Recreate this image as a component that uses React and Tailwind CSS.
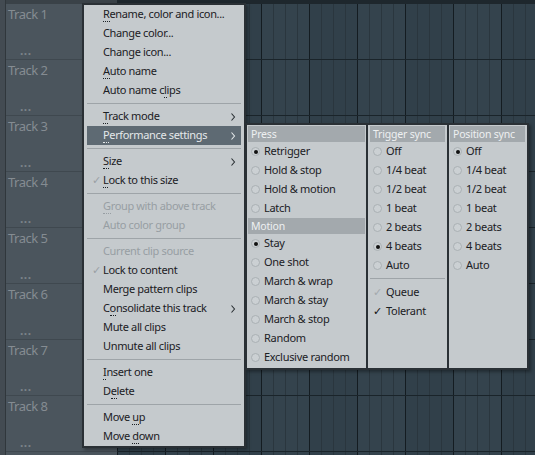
import React from 'react';

const mainMenu = [
  { label: 'Rename, color and icon...', u: 0 },
  { label: 'Change color...' },
  { label: 'Change icon...' },
  { label: 'Auto name', u: 0 },
  { label: 'Auto name clips', u: 11 },
  'sep',
  { label: 'Track mode', u: 0, sub: true },
  { label: 'Performance settings', u: 0, sub: true, active: true },
  'sep',
  { label: 'Size', u: 0, sub: true },
  { label: 'Lock to this size', u: 0, check: true },
  'sep',
  { label: 'Group with above track', u: 0, disabled: true },
  { label: 'Auto color group', disabled: true },
  'sep',
  { label: 'Current clip source', disabled: true },
  { label: 'Lock to content', check: true },
  { label: 'Merge pattern clips' },
  { label: 'Consolidate this track', u: 1, sub: true },
  { label: 'Mute all clips' },
  { label: 'Unmute all clips' },
  'sep',
  { label: 'Insert one', u: 0 },
  { label: 'Delete', u: 1 },
  'sep',
  { label: 'Move up', u: 5 },
  { label: 'Move down', u: 5 },
];

const press = [
  { label: 'Retrigger', on: true },
  { label: 'Hold & stop' },
  { label: 'Hold & motion' },
  { label: 'Latch' },
];
const motion = [
  { label: 'Stay', on: true },
  { label: 'One shot' },
  { label: 'March & wrap' },
  { label: 'March & stay' },
  { label: 'March & stop' },
  { label: 'Random' },
  { label: 'Exclusive random' },
];
const beats = ['Off', '1/4 beat', '1/2 beat', '1 beat', '2 beats', '4 beats', 'Auto'];

const rows = [1, 2, 3, 4, 5, 6, 7, 8, 9];
const cols = Array.from({ length: 36 }, (_, i) => i);

function Label({ text, u }) {
  if (u === undefined) return <>{text}</>;
  return (
    <>
      {text.slice(0, u)}
      <span className="border-b border-dotted border-current">{text[u]}</span>
      {text.slice(u + 1)}
    </>
  );
}

function Chevron({ light }) {
  return (
    <svg width="6" height="10" viewBox="0 0 6 10" className="absolute right-[5px] top-[5px]">
      <path d="M1.5 1.5 L4.5 5 L1.5 8.5" fill="none" stroke={light ? '#e4e8ea' : '#2a3034'} strokeWidth="1.1" />
    </svg>
  );
}

function Radio({ on }) {
  return (
    <span className="w-[9px] h-[9px] rounded-full border border-[#aab0b4] bg-[#cbd0d3] flex items-center justify-center shrink-0">
      {on && <span className="w-[4px] h-[4px] rounded-full bg-[#111]" />}
    </span>
  );
}

function RadioRow({ label, on }) {
  return (
    <div className="h-[19px] flex items-center pl-[3px]">
      <Radio on={on} />
      <span className="ml-[4px]">{label}</span>
    </div>
  );
}

function Header({ children }) {
  return (
    <div className="h-[16px] bg-[#a3a9ad] text-[#eef0f1] text-[10.5px] leading-[16px] pl-[3px] tracking-[-0.2px]">{children}</div>
  );
}

export default function App() {
  return (
    <div className="w-[535px] h-[455px] relative overflow-hidden flex bg-[#34434d] font-['Noto_Sans',sans-serif]">
      {/* track headers */}
      <div className="w-[117px] shrink-0 flex">
        <div className="w-[5px] bg-[#434b52]" />
        <div className="w-[1px] bg-[#30373c]" />
        <div className="flex-1 flex flex-col bg-[#4b555d]">
          <div className="h-[4px] shrink-0 bg-[#3a4248]" />
          {rows.map((r) => (
            <div key={r} className="h-[56px] shrink-0 flex flex-col border-b border-[#3f484f] pl-[2px]">
              {r < 9 && (
                <>
                  <div className="text-[13px] leading-[16px] tracking-[-0.5px] text-[#858c92] pt-[2px]">Track {r}</div>
                  <div className="mt-auto pl-[12px] text-[12px] leading-[10px] font-bold text-[#7b8389] pb-[3px] tracking-[0.5px]">...</div>
                </>
              )}
            </div>
          ))}
        </div>
      </div>

      {/* playlist grid */}
      <div className="flex-1 flex flex-col">
        <div className="h-[4px] shrink-0 bg-[#1e272d]" />
        {rows.map((r) => (
          <div key={r} className="h-[56px] shrink-0 flex border-b border-[#1a242a]">
            {cols.map((c) => (
              <div
                key={c}
                className={`w-[12px] shrink-0 border-l ${c % 4 === 0 ? 'border-[#141c21]' : 'border-[#2a363e]'} ${Math.floor(c / 4) % 2 ? 'bg-[#34434d]' : 'bg-[#31404a]'}`}
              />
            ))}
          </div>
        ))}
      </div>

      {/* context menu */}
      <div className="absolute left-[82px] top-[3px] w-[164px] border-2 border-[#2a3035] bg-[#c5cacd] text-[11px] tracking-[-0.35px] text-[#1b2024] shadow-[2px_2px_3px_rgba(0,0,0,0.35)]">
        {mainMenu.map((item, i) =>
          item === 'sep' ? (
            <div key={i} className="h-[7px] flex items-center px-[3px]">
              <div className="h-[1px] w-full bg-[#9ea4a8]" />
            </div>
          ) : (
            <div
              key={i}
              className={`relative mx-[3px] h-[19px] leading-[18px] pl-[16px] whitespace-nowrap ${item.active ? 'bg-[#5e6a73] text-[#e4e8ea]' : ''} ${item.disabled ? 'text-[#979ea3]' : ''}`}
            >
              {item.check && <span className="absolute left-[5px] top-0 text-[11px] text-[#9aa0a5]">✓</span>}
              <Label text={item.label} u={item.u} />
              {item.sub && <Chevron light={item.active} />}
            </div>
          )
        )}
      </div>

      {/* performance settings submenu */}
      <div className="absolute left-[245px] top-[123px] w-[284px] h-[247px] border-2 border-[#2a3035] bg-[#c5cacd] text-[11px] tracking-[-0.3px] text-[#1b2024] flex shadow-[2px_2px_3px_rgba(0,0,0,0.35)]">
        <div className="w-[119px] shrink-0 p-[1px]">
          <Header>Press</Header>
          {press.map((p) => (
            <RadioRow key={p.label} label={p.label} on={p.on} />
          ))}
          <Header>Motion</Header>
          {motion.map((p) => (
            <RadioRow key={p.label} label={p.label} on={p.on} />
          ))}
        </div>
        <div className="w-[2px] shrink-0 bg-[#2a3035]" />
        <div className="w-[79px] shrink-0 py-[1px] px-[2px]">
          <Header>Trigger sync</Header>
          {beats.map((b) => (
            <RadioRow key={b} label={b} on={b === '4 beats'} />
          ))}
          <div className="h-[7px] flex items-center">
            <div className="h-[1px] w-full bg-[#9ea4a8]" />
          </div>
          <div className="h-[19px] leading-[19px] relative pl-[16px]">
            <span className="absolute left-[3px] top-0 text-[11px] text-[#a3a9ad]">✓</span>
            Queue
          </div>
          <div className="h-[19px] leading-[19px] relative pl-[16px]">
            <span className="absolute left-[3px] top-0 text-[11px] text-[#111]">✓</span>
            Tolerant
          </div>
        </div>
        <div className="w-[2px] shrink-0 bg-[#2a3035]" />
        <div className="flex-1 py-[1px] pl-[1px] pr-[2px]">
          <Header>Position sync</Header>
          {beats.map((b) => (
            <RadioRow key={b} label={b} on={b === 'Off'} />
          ))}
        </div>
      </div>
    </div>
  );
}
